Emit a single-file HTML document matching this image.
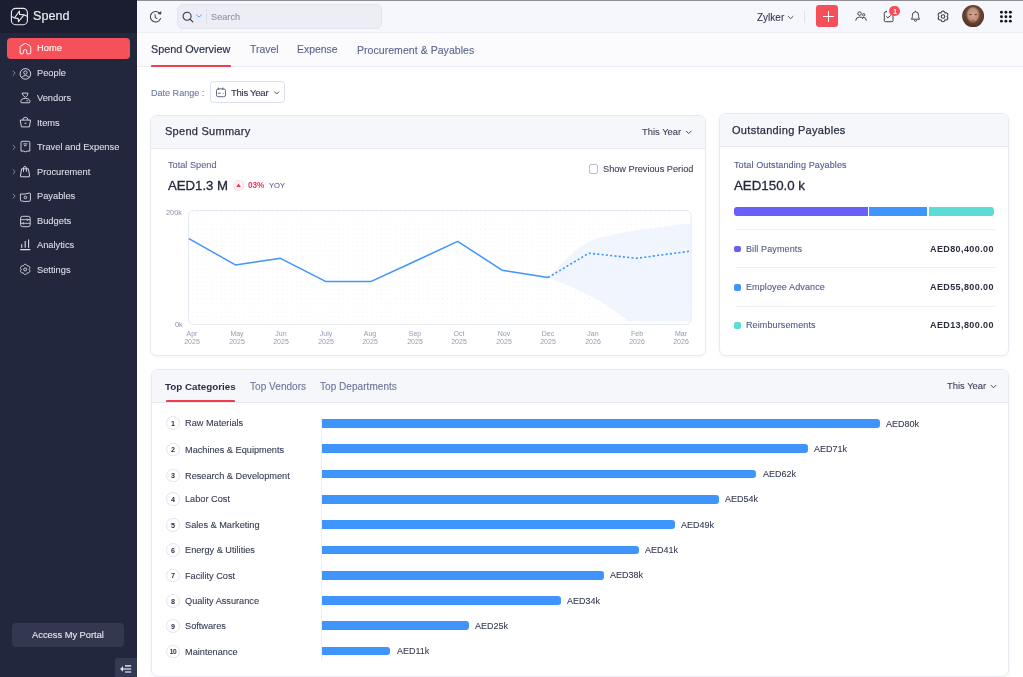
<!DOCTYPE html>
<html><head><meta charset="utf-8">
<style>
*{margin:0;padding:0;box-sizing:border-box}
html,body{width:1023px;height:677px;overflow:hidden;background:#ffffff;font-family:"Liberation Sans",sans-serif;position:relative}
.a{position:absolute;white-space:nowrap;line-height:1;will-change:transform}
svg{display:block}
</style></head><body>
<div style="position:absolute;left:0px;top:0px;width:137px;height:677px;background:#22273d"></div>
<div style="position:absolute;left:0px;top:0px;width:137px;height:33px;background:#1b1e30"></div>
<svg style="position:absolute;left:10px;top:7px;" width="19" height="19" viewBox="10.000 7.000 19 19" fill="none"><rect x="11.4" y="8.3" width="16" height="16.4" rx="4.3" stroke="#e8e9ef" stroke-width="1.15"/><path d="M19.5 14.4 L19.4 11 L14.6 17.9 M11.6 16.3 Q14 18.4 18.3 18.6 L18.4 21.7 L23.9 15.1 M19.5 14.4 Q24.5 14.3 27.2 16.2" stroke="#e8e9ef" stroke-width="1.1" stroke-linejoin="round" stroke-linecap="round"/></svg>
<div class="a" style="left:33.20px;top:9.73px;font-size:12.6px;color:#eceef4;-webkit-text-stroke:0.15px #eceef4;">Spend</div>
<div style="position:absolute;left:7px;top:38px;width:123px;height:21px;background:#f5515a;border-radius:4px"></div>
<div class="a" style="left:37.20px;top:43.83px;font-size:9.3px;color:#fff;-webkit-text-stroke:0.1px #fff;">Home</div>
<div class="a" style="left:37.20px;top:69.23px;font-size:9.3px;color:#dcdee8;-webkit-text-stroke:0.1px #dcdee8;">People</div>
<svg style="position:absolute;left:11px;top:69px;" width="6" height="8" viewBox="0.000 -0.700 6 8" fill="none"><path d="M2.0 1.4 L4.2 3.5 L2.0 5.6" stroke="#8b90a6" stroke-width="0.9" stroke-linecap="round" stroke-linejoin="round"/></svg>
<div class="a" style="left:37.20px;top:93.83px;font-size:9.3px;color:#dcdee8;-webkit-text-stroke:0.1px #dcdee8;">Vendors</div>
<div class="a" style="left:37.20px;top:118.53px;font-size:9.3px;color:#dcdee8;-webkit-text-stroke:0.1px #dcdee8;">Items</div>
<div class="a" style="left:37.20px;top:143.33px;font-size:9.3px;color:#dcdee8;-webkit-text-stroke:0.1px #dcdee8;">Travel and Expense</div>
<svg style="position:absolute;left:11px;top:143px;" width="6" height="8" viewBox="0.000 -0.800 6 8" fill="none"><path d="M2.0 1.4 L4.2 3.5 L2.0 5.6" stroke="#8b90a6" stroke-width="0.9" stroke-linecap="round" stroke-linejoin="round"/></svg>
<div class="a" style="left:37.20px;top:167.73px;font-size:9.3px;color:#dcdee8;-webkit-text-stroke:0.1px #dcdee8;">Procurement</div>
<svg style="position:absolute;left:11px;top:168px;" width="6" height="8" viewBox="0.000 -0.200 6 8" fill="none"><path d="M2.0 1.4 L4.2 3.5 L2.0 5.6" stroke="#8b90a6" stroke-width="0.9" stroke-linecap="round" stroke-linejoin="round"/></svg>
<div class="a" style="left:37.20px;top:192.23px;font-size:9.3px;color:#dcdee8;-webkit-text-stroke:0.1px #dcdee8;">Payables</div>
<svg style="position:absolute;left:11px;top:192px;" width="6" height="8" viewBox="0.000 -0.700 6 8" fill="none"><path d="M2.0 1.4 L4.2 3.5 L2.0 5.6" stroke="#8b90a6" stroke-width="0.9" stroke-linecap="round" stroke-linejoin="round"/></svg>
<div class="a" style="left:37.20px;top:216.83px;font-size:9.3px;color:#dcdee8;-webkit-text-stroke:0.1px #dcdee8;">Budgets</div>
<div class="a" style="left:37.20px;top:241.13px;font-size:9.3px;color:#dcdee8;-webkit-text-stroke:0.1px #dcdee8;">Analytics</div>
<div class="a" style="left:37.20px;top:265.53px;font-size:9.3px;color:#dcdee8;-webkit-text-stroke:0.1px #dcdee8;">Settings</div>
<svg style="position:absolute;left:19px;top:42px;" width="13" height="13" viewBox="-0.400 -0.400 13 13" fill="none"><path d="M0.7 5 Q0.7 4.1 1.4 3.6 L4.9 1.4 Q6 0.9 7.1 1.4 L10.6 3.6 Q11.35 4.1 11.35 5 V10.6 Q11.35 11.4 10.5 11.4 H8.2 Q7.35 11.4 7.35 10.6 V8.9 Q7.35 7.2 5.7 7.2 Q4.0 7.2 4.0 8.9 V10.6 Q4.0 11.4 3.2 11.4 H1.5 Q0.7 11.4 0.7 10.6 Z" stroke="#fff" stroke-width="0.95" stroke-linejoin="round"/></svg>
<svg style="position:absolute;left:19px;top:67px;" width="13" height="13" viewBox="-0.400 -0.900 13 13" fill="none"><circle cx="6" cy="6" r="5.3" stroke="#dfe1ea" stroke-width="0.95"/><circle cx="6" cy="4.6" r="1.7" stroke="#dfe1ea" stroke-width="0.9"/><path d="M2.6 9.6 Q3.4 7.6 6 7.6 Q8.6 7.6 9.4 9.6" stroke="#dfe1ea" stroke-width="0.9"/></svg>
<svg style="position:absolute;left:19px;top:92px;" width="13" height="13" viewBox="-0.400 -0.200 13 13" fill="none"><path d="M2.6 0.9 H8.4 Q8.9 3.4 6 5.2 Q3.2 3.4 2.6 0.9 Z" stroke="#dfe1ea" stroke-width="0.9" stroke-linejoin="round"/><path d="M1.4 9.6 Q1.4 6.2 6 6.2 Q10.6 6.2 10.6 9.6 Q10.6 10.6 9.6 10.6 H2.4 Q1.4 10.6 1.4 9.6 Z" stroke="#dfe1ea" stroke-width="0.9"/><path d="M7 8.6 H8.6" stroke="#dfe1ea" stroke-width="0.9"/></svg>
<svg style="position:absolute;left:19px;top:116px;" width="13" height="13" viewBox="-0.400 -0.500 13 13" fill="none"><path d="M3.4 3.6 Q3.4 0.8 6 0.8 Q8.6 0.8 8.6 3.6" stroke="#dfe1ea" stroke-width="0.9"/><path d="M0.8 3.6 H11.2 L10 10.4 H2 Z" stroke="#dfe1ea" stroke-width="0.9" stroke-linejoin="round"/><path d="M5 6.8 H7" stroke="#dfe1ea" stroke-width="0.9"/></svg>
<svg style="position:absolute;left:19px;top:140px;" width="13" height="13" viewBox="-0.400 -0.500 13 13" fill="none"><path d="M1.6 1.8 Q1.6 0.8 2.6 0.8 H9.4 Q10.4 0.8 10.4 1.8 V10.6 L7.6 10.6 L6 11.4 L4.4 10.6 L1.6 10.6 Z" stroke="#dfe1ea" stroke-width="0.9" stroke-linejoin="round"/><path d="M4 3.4 H8 M4.6 5.2 H7" stroke="#dfe1ea" stroke-width="0.9"/></svg>
<svg style="position:absolute;left:19px;top:191px;" width="13" height="13" viewBox="-0.400 -0.400 13 13" fill="none"><path d="M1 2.6 Q5 3.2 10 1.6 Q11 1.4 11 2.4 V9 Q11 9.8 10 9.9 Q5 10.4 1.8 9.6 Q1 9.4 1 8.6 Z" stroke="#dfe1ea" stroke-width="0.9" stroke-linejoin="round"/><circle cx="6" cy="6" r="1.3" stroke="#dfe1ea" stroke-width="0.9"/></svg>
<svg style="position:absolute;left:19px;top:215px;" width="13" height="13" viewBox="-0.400 -0.500 13 13" fill="none"><rect x="1.2" y="0.8" width="9.6" height="10.4" rx="2" stroke="#dfe1ea" stroke-width="0.9"/><path d="M1.2 4.2 H10.8 M1.2 7.8 H10.8 M7.6 3 L8.8 4.2 L7.6 5.4 M4.4 6.6 L3.2 7.8 L4.4 9" stroke="#dfe1ea" stroke-width="0.8"/></svg>
<svg style="position:absolute;left:16px;top:162px;" width="18" height="18" viewBox="16.000 162.000 18 18" fill="none"><path d="M21.6 168.8 H28.4 L29.6 176.1 Q29.7 176.8 29.0 176.8 H21.0 Q20.3 176.8 20.4 176.1 Z" stroke="#dfe1ea" stroke-width="0.95" stroke-linejoin="round"/><path d="M23.3 168.8 Q23.3 166.4 24.95 166.4 Q26.6 166.4 26.6 168.8 M23.5 169.7 V171.4 M26.4 169.7 V171.4" stroke="#dfe1ea" stroke-width="0.95" stroke-linecap="round"/></svg>
<svg style="position:absolute;left:16px;top:236px;" width="18" height="18" viewBox="16.000 236.000 18 18" fill="none"><path d="M20.2 249.6 H30.3 M21.7 247.8 V244.2 M25.2 247.8 V241 M28.6 247.8 V239.5" stroke="#dfe1ea" stroke-width="1.1"/></svg>
<svg style="position:absolute;left:16px;top:260px;" width="18" height="18" viewBox="16.000 260.000 18 18" fill="none"><path d="M29.15 269.40 L29.38 269.69 L29.57 270.01 L29.72 270.36 L29.82 270.72 L29.85 271.09 L29.81 271.45 L29.70 271.79 L29.52 272.10 L29.28 272.36 L28.99 272.58 L28.66 272.74 L28.30 272.84 L27.92 272.88 L27.54 272.87 L27.18 272.82 L27.04 273.17 L26.85 273.50 L26.63 273.80 L26.36 274.06 L26.06 274.27 L25.73 274.42 L25.38 274.49 L25.02 274.49 L24.67 274.42 L24.34 274.27 L24.04 274.06 L23.77 273.80 L23.55 273.50 L23.36 273.17 L23.23 272.82 L22.86 272.87 L22.48 272.88 L22.10 272.84 L21.74 272.74 L21.41 272.58 L21.12 272.36 L20.88 272.10 L20.70 271.79 L20.59 271.45 L20.55 271.09 L20.58 270.72 L20.68 270.36 L20.83 270.01 L21.02 269.69 L21.25 269.40 L21.02 269.11 L20.83 268.79 L20.68 268.44 L20.58 268.08 L20.55 267.71 L20.59 267.35 L20.70 267.01 L20.88 266.70 L21.12 266.44 L21.41 266.22 L21.74 266.06 L22.10 265.96 L22.48 265.92 L22.86 265.93 L23.22 265.98 L23.36 265.63 L23.55 265.30 L23.77 265.00 L24.04 264.74 L24.34 264.53 L24.67 264.38 L25.02 264.31 L25.38 264.31 L25.73 264.38 L26.06 264.53 L26.36 264.74 L26.63 265.00 L26.85 265.30 L27.04 265.63 L27.18 265.98 L27.54 265.93 L27.92 265.92 L28.30 265.96 L28.66 266.06 L28.99 266.22 L29.28 266.44 L29.52 266.70 L29.70 267.01 L29.81 267.35 L29.85 267.71 L29.82 268.08 L29.72 268.44 L29.57 268.79 L29.38 269.11 Z" stroke="#dfe1ea" stroke-width="0.95" stroke-linejoin="round"/><circle cx="25.2" cy="269.4" r="1.5" stroke="#dfe1ea" stroke-width="0.95"/></svg>
<div style="position:absolute;left:12px;top:623px;width:112px;height:24px;background:#33374f;border-radius:4px"></div>
<div class="a" style="left:68.00px;transform:translateX(-50%);top:630.73px;font-size:9.3px;color:#e6e8f0;-webkit-text-stroke:0.1px #e6e8f0;">Access My Portal</div>
<div style="position:absolute;left:115px;top:658px;width:22px;height:19px;background:#353a54;border-top-left-radius:3px"></div>
<svg style="position:absolute;left:112px;top:655px;" width="28" height="22" viewBox="112.000 655.000 28 22" fill="none"><path d="M125 665.9 H131.2 M122.6 669 H131.2 M125 672.05 H131.2" stroke="#c3c6d3" stroke-width="1.6"/><path d="M120.1 668.9 L123 666.1 L123 671.7 Z" fill="#dfe1ea"/></svg>
<div style="position:absolute;left:137px;top:0px;width:886px;height:33px;background:#f6f7fc;border-bottom:1px solid #ecedf2"></div>
<div style="position:absolute;left:137px;top:0px;width:886px;height:1px;background:#8e8f95"></div>
<svg style="position:absolute;left:145px;top:6px;" width="20" height="20" viewBox="145.000 6.000 20 20" fill="none"><path d="M159.3 13.0 A5.25 5.25 0 1 0 160.5 18.6" stroke="#3a3e50" stroke-width="1.1" stroke-linecap="round"/><path d="M161.3 10.9 L161.1 14.5 L157.7 13.9 Z" fill="#3a3e50"/><path d="M155.0 14.6 L155.4 18.0 L157.0 18.4" stroke="#3a3e50" stroke-width="1" stroke-linecap="round" stroke-linejoin="round"/></svg>
<div style="position:absolute;left:177px;top:4px;width:205px;height:25px;background:#ecedf5;border:1px solid #e2e4ee;border-radius:6px"></div>
<svg style="position:absolute;left:181px;top:10px;" width="14" height="14" viewBox="0.000 0.000 14 14" fill="none"><circle cx="6.1" cy="6.2" r="4.0" stroke="#2e3246" stroke-width="1.05"/><path d="M9.0 9.1 L11.8 11.9" stroke="#2e3246" stroke-width="1.1" stroke-linecap="round"/></svg>
<svg style="position:absolute;left:195px;top:13px;" width="8" height="6" viewBox="0.000 0.000 8 6" fill="none"><path d="M1.6 2.0 L4 4.2 L6.4 2.0" stroke="#5b9af2" stroke-width="0.95" stroke-linecap="round"/></svg>
<div style="position:absolute;left:206px;top:9px;width:1px;height:15px;background:#dcdee8"></div>
<div class="a" style="left:211.00px;top:13.21px;font-size:9.2px;color:#8f94a8;-webkit-text-stroke:0.1px #8f94a8;">Search</div>
<div class="a" style="left:757.00px;top:13.04px;font-size:10px;color:#30354a;-webkit-text-stroke:0.1px #30354a;">Zylker</div>
<svg style="position:absolute;left:786px;top:14px;" width="9" height="7" viewBox="0.000 0.000 9 7" fill="none"><path d="M2.2 2.4 L4.6 4.7 L7 2.4" stroke="#4a4f62" stroke-width="1" stroke-linecap="round"/></svg>
<div style="position:absolute;left:804px;top:11px;width:1px;height:12px;background:#e0e2ea"></div>
<div style="position:absolute;left:816px;top:5px;width:22px;height:22px;background:#f5505a;border-radius:3px"></div>
<div style="position:absolute;left:822.5px;top:16.1px;width:11px;height:0.9px;background:#fff"></div>
<div style="position:absolute;left:827.6px;top:11px;width:0.9px;height:11px;background:#fff"></div>
<svg style="position:absolute;left:852px;top:8px;" width="18" height="16" viewBox="852.000 8.000 18 16" fill="none"><circle cx="859.6" cy="13.6" r="1.75" stroke="#34384a" stroke-width="0.95"/><circle cx="863.7" cy="14.8" r="1.2" stroke="#34384a" stroke-width="0.9"/><path d="M855.7 20.3 Q855.9 17.1 859.6 17.0 Q862.0 17.0 862.9 18.4 M862.4 17.9 Q863 17.4 864 17.4 Q866.2 17.5 866.3 20.3" stroke="#34384a" stroke-width="0.95" stroke-linecap="round"/></svg>
<svg style="position:absolute;left:880px;top:8px;" width="16" height="16" viewBox="880.000 8.000 16 16" fill="none"><path d="M886.2 12.0 H885.4 Q884.3 12.0 884.3 13.1 V20.6 Q884.3 21.7 885.4 21.7 H891.9 Q893.0 21.7 893.0 20.6 V13.1 Q893.0 12.0 891.9 12.0 H891.2" stroke="#34384a" stroke-width="0.95"/><circle cx="886.4" cy="11.6" r="0.75" fill="#34384a"/><path d="M886.6 16.6 L887.9 17.8 L890.6 15.6" stroke="#34384a" stroke-width="0.95" stroke-linecap="round" stroke-linejoin="round"/></svg>
<div style="position:absolute;left:889.4px;top:5.9px;width:10.4px;height:10.4px;border-radius:50%;background:#f5505a"></div>
<div class="a" style="left:894.60px;transform:translateX(-50%);top:7.95px;font-size:7.5px;color:#fff;font-weight:bold;">1</div>
<svg style="position:absolute;left:909px;top:10px;" width="13" height="13" viewBox="0.000 0.000 13 13" fill="none"><path d="M2.4 9.2 Q3.4 8.2 3.4 6.4 V5.2 Q3.4 1.8 6.5 1.8 Q9.6 1.8 9.6 5.2 V6.4 Q9.6 8.2 10.6 9.2 Z" stroke="#3a3f52" stroke-width="1" stroke-linejoin="round"/><path d="M5.2 10.6 Q6.5 12.4 7.8 10.6" stroke="#3a3f52" stroke-width="1" stroke-linecap="round"/><path d="M6.5 0.8 V1.8" stroke="#3a3f52" stroke-width="1"/></svg>
<svg style="position:absolute;left:936px;top:9px;" width="14" height="14" viewBox="-0.500 -0.900 14 14" fill="none"><path d="M10.50 6.50 L10.76 6.80 L10.98 7.13 L11.16 7.49 L11.27 7.87 L11.32 8.25 L11.28 8.63 L11.17 8.98 L10.99 9.30 L10.74 9.58 L10.43 9.79 L10.07 9.95 L9.69 10.04 L9.29 10.07 L8.89 10.04 L8.50 9.96 L8.37 10.34 L8.20 10.70 L7.97 11.03 L7.70 11.32 L7.39 11.55 L7.05 11.71 L6.68 11.79 L6.32 11.79 L5.95 11.71 L5.61 11.55 L5.30 11.32 L5.03 11.03 L4.80 10.70 L4.63 10.34 L4.50 9.96 L4.11 10.04 L3.71 10.07 L3.31 10.04 L2.93 9.95 L2.57 9.79 L2.26 9.58 L2.01 9.30 L1.83 8.98 L1.72 8.63 L1.68 8.25 L1.73 7.87 L1.84 7.49 L2.02 7.13 L2.24 6.80 L2.50 6.50 L2.24 6.20 L2.02 5.87 L1.84 5.51 L1.73 5.13 L1.68 4.75 L1.72 4.37 L1.83 4.02 L2.01 3.70 L2.26 3.42 L2.57 3.21 L2.93 3.05 L3.31 2.96 L3.71 2.93 L4.11 2.96 L4.50 3.04 L4.63 2.66 L4.80 2.30 L5.03 1.97 L5.30 1.68 L5.61 1.45 L5.95 1.29 L6.32 1.21 L6.68 1.21 L7.05 1.29 L7.39 1.45 L7.70 1.68 L7.97 1.97 L8.20 2.30 L8.37 2.66 L8.50 3.04 L8.89 2.96 L9.29 2.93 L9.69 2.96 L10.07 3.05 L10.43 3.21 L10.74 3.42 L10.99 3.70 L11.17 4.02 L11.28 4.37 L11.32 4.75 L11.27 5.13 L11.16 5.51 L10.98 5.87 L10.76 6.20 Z" stroke="#34384a" stroke-width="1.05" stroke-linejoin="round"/><circle cx="6.5" cy="6.5" r="1.75" stroke="#34384a" stroke-width="1.05"/></svg>
<svg style="position:absolute;left:962px;top:5px;" width="23" height="23" viewBox="0.000 0.000 23 23" fill="none"><defs><clipPath id="av"><circle cx="11.1" cy="11.1" r="11"/></clipPath><radialGradient id="fg" cx="0.5" cy="0.45" r="0.5"><stop offset="0" stop-color="#d2a58e"/><stop offset="0.7" stop-color="#c0917a"/><stop offset="1" stop-color="#c0917a" stop-opacity="0"/></radialGradient><radialGradient id="hg" cx="0.5" cy="0.4" r="0.6"><stop offset="0" stop-color="#8a5e48"/><stop offset="1" stop-color="#4e3022"/></radialGradient></defs><g clip-path="url(#av)"><rect width="23" height="23" fill="url(#hg)"/><ellipse cx="11" cy="10.4" rx="7" ry="8.6" fill="url(#fg)"/><ellipse cx="8.4" cy="9.6" rx="1.6" ry="0.7" fill="#6e4a3c"/><ellipse cx="13.8" cy="9.6" rx="1.6" ry="0.7" fill="#6e4a3c"/><ellipse cx="11" cy="15.6" rx="2" ry="0.8" fill="#a06a5a"/></g></svg>
<svg style="position:absolute;left:1000px;top:10px;" width="12" height="13" viewBox="0.000 -0.800 12 13" fill="none"><circle cx="1.45" cy="1.45" r="1.45" fill="#15171f"/><circle cx="1.45" cy="5.90" r="1.45" fill="#15171f"/><circle cx="1.45" cy="10.35" r="1.45" fill="#15171f"/><circle cx="5.90" cy="1.45" r="1.45" fill="#15171f"/><circle cx="5.90" cy="5.90" r="1.45" fill="#15171f"/><circle cx="5.90" cy="10.35" r="1.45" fill="#15171f"/><circle cx="10.35" cy="1.45" r="1.45" fill="#15171f"/><circle cx="10.35" cy="5.90" r="1.45" fill="#15171f"/><circle cx="10.35" cy="10.35" r="1.45" fill="#15171f"/></svg>
<div style="position:absolute;left:137px;top:33px;width:886px;height:34px;background:#fbfbfe;border-bottom:1px solid #ebecf5"></div>
<div class="a" style="left:150.60px;top:44.06px;font-size:10.8px;color:#2f3348;-webkit-text-stroke:0.2px #2f3348;">Spend Overview</div>
<div style="position:absolute;left:150.6px;top:65px;width:80.4px;height:2.2px;background:#f03d4b;border-radius:1px 1px 0 0"></div>
<div class="a" style="left:250.30px;top:44.80px;font-size:10.4px;color:#5b6389;-webkit-text-stroke:0.1px #5b6389;">Travel</div>
<div class="a" style="left:297.20px;top:44.80px;font-size:10.4px;color:#5b6389;-webkit-text-stroke:0.1px #5b6389;">Expense</div>
<div class="a" style="left:357.30px;top:44.71px;font-size:10.5px;color:#5b6389;letter-spacing:0.05px;-webkit-text-stroke:0.1px #5b6389;">Procurement &amp; Payables</div>
<div class="a" style="left:151.40px;top:88.54px;font-size:9.05px;color:#6d76a0;-webkit-text-stroke:0.1px #6d76a0;">Date Range :</div>
<div style="position:absolute;left:210.4px;top:81.3px;width:74.3px;height:21.7px;background:#fff;border:1px solid #dcdff0;border-radius:4px"></div>
<svg style="position:absolute;left:212px;top:84px;" width="16" height="16" viewBox="212.000 84.000 16 16" fill="none"><rect x="216.5" y="88.9" width="9" height="7.8" rx="1.8" stroke="#5f6689" stroke-width="1"/><path d="M218.4 87.9 V89.6 M222.9 87.9 V89.6 M218.4 93.2 H220.2" stroke="#5f6689" stroke-width="1" stroke-linecap="round"/><circle cx="223.2" cy="93.2" r="0.55" fill="#5f6689"/></svg>
<div class="a" style="left:231.20px;top:88.37px;font-size:9.6px;color:#2f3348;letter-spacing:-0.3px;-webkit-text-stroke:0.1px #2f3348;">This Year</div>
<svg style="position:absolute;left:272px;top:88px;" width="9" height="9" viewBox="272.000 88.000 9 9" fill="none"><path d="M274.5 91.8 L276.7 94.0 L278.9 91.8" stroke="#4a4f62" stroke-width="1" stroke-linecap="round" stroke-linejoin="round"/></svg>
<div style="position:absolute;left:150px;top:115px;width:556px;height:241px;background:#fff;border:1px solid #e8eaf2;border-radius:7px;overflow:hidden;box-shadow:0 1px 3px rgba(30,40,80,0.05)"><div style="position:absolute;left:0;top:0;right:0;height:33px;background:#f6f7fb;border-bottom:1px solid #e8eaf2"></div></div>
<div class="a" style="left:164.50px;top:125.99px;font-size:11px;color:#2b2f44;letter-spacing:0.27px;-webkit-text-stroke:0.25px #2b2f44;">Spend Summary</div>
<div class="a" style="left:641.90px;top:127.34px;font-size:9.4px;color:#3a3f55;-webkit-text-stroke:0.1px #3a3f55;">This Year</div>
<svg style="position:absolute;left:684px;top:128px;" width="10" height="9" viewBox="-0.200 -0.800 10 9" fill="none"><path d="M2.2 2.4 L4.5 4.8 L6.8 2.4" stroke="#4a4f62" stroke-width="1" stroke-linecap="round"/></svg>
<div style="position:absolute;left:589px;top:164.4px;width:9.2px;height:9.2px;border:1px solid #b9bdcc;border-radius:2px;background:#fff"></div>
<div class="a" style="left:603.00px;top:165.11px;font-size:9.2px;color:#3a3f55;-webkit-text-stroke:0.1px #3a3f55;">Show Previous Period</div>
<div class="a" style="left:167.60px;top:161.01px;font-size:9.2px;color:#5d6690;-webkit-text-stroke:0.1px #5d6690;">Total Spend</div>
<div class="a" style="left:167.60px;top:178.73px;font-size:13.2px;color:#23283d;-webkit-text-stroke:0.3px #23283d;">AED1.3 M</div>
<div style="position:absolute;left:233.1px;top:180.1px;width:10.9px;height:10.9px;border-radius:50%;background:#fff3f5;border:1px solid #fadbe2"></div>
<svg style="position:absolute;left:235px;top:182px;" width="7" height="6" viewBox="0.000 0.000 7 6" fill="none"><path d="M3.6 1.6 L5.8 4.9 H1.4 Z" fill="#ec3463"/></svg>
<div class="a" style="left:247.90px;top:181.66px;font-size:8.2px;color:#ec3463;font-weight:bold;">03%</div>
<div class="a" style="left:269.00px;top:182.17px;font-size:7.6px;color:#5b6390;-webkit-text-stroke:0.1px #5b6390;">YOY</div>
<svg style="position:absolute;left:150px;top:190px;" width="560" height="170" viewBox="150.000 190.000 560 170" fill="none"><defs><pattern id="dots" x="192.1" y="215.4" width="4.72" height="4.38" patternUnits="userSpaceOnUse"><rect x="-0.65" y="-0.65" width="1.3" height="1.3" fill="#e1e4ee"/></pattern>
<clipPath id="pc"><rect x="188.5" y="210.5" width="502.6" height="113.9" rx="5"/></clipPath></defs>
<rect x="188.5" y="210.5" width="502.6" height="113.9" rx="5" fill="#fff"/>
<rect x="188.5" y="210.5" width="502.6" height="113.9" fill="url(#dots)" clip-path="url(#pc)"/>
<path d="M548.1 277.5 C565 262 575 246 598 238 C620 232 650 228 692 223 V321.5 H628 C605 300 565 284 548.1 277.5 Z" fill="#e6effd" fill-opacity="0.55" clip-path="url(#pc)"/>
<rect x="188.5" y="210.5" width="502.6" height="113.9" rx="5" stroke="#e6e9f2" stroke-width="1"/>
<polyline points="188.9,238.7 235.4,264.9 280.4,258.3 326.1,281.6 370.7,281.6 414.5,261.5 457.7,241.4 502.0,270.2 548.1,277.5" stroke="#4094fb" stroke-width="1.5" fill="none" stroke-linejoin="round"/>
<polyline points="548.1,277.5 588.9,253.2 636.6,258.3 690.7,251.1" stroke="#4094fb" stroke-width="1.6" fill="none" stroke-dasharray="2.1 2.2"/></svg>
<div class="a" style="right:840.50px;top:208.64px;font-size:7.4px;color:#8d93ad;-webkit-text-stroke:0.01px #8d93ad;">200k</div>
<div class="a" style="right:840.70px;top:320.54px;font-size:7.4px;color:#8d93ad;-webkit-text-stroke:0.01px #8d93ad;">0k</div>
<div class="a" style="left:192.40px;transform:translateX(-50%);top:329.97px;font-size:7.0px;color:#959bb4;-webkit-text-stroke:0.01px #959bb4;">Apr</div>
<div class="a" style="left:192.40px;transform:translateX(-50%);top:337.57px;font-size:7.0px;color:#959bb4;-webkit-text-stroke:0.01px #959bb4;">2025</div>
<div class="a" style="left:236.86px;transform:translateX(-50%);top:329.97px;font-size:7.0px;color:#959bb4;-webkit-text-stroke:0.01px #959bb4;">May</div>
<div class="a" style="left:236.86px;transform:translateX(-50%);top:337.57px;font-size:7.0px;color:#959bb4;-webkit-text-stroke:0.01px #959bb4;">2025</div>
<div class="a" style="left:281.32px;transform:translateX(-50%);top:329.97px;font-size:7.0px;color:#959bb4;-webkit-text-stroke:0.01px #959bb4;">Jun</div>
<div class="a" style="left:281.32px;transform:translateX(-50%);top:337.57px;font-size:7.0px;color:#959bb4;-webkit-text-stroke:0.01px #959bb4;">2025</div>
<div class="a" style="left:325.78px;transform:translateX(-50%);top:329.97px;font-size:7.0px;color:#959bb4;-webkit-text-stroke:0.01px #959bb4;">July</div>
<div class="a" style="left:325.78px;transform:translateX(-50%);top:337.57px;font-size:7.0px;color:#959bb4;-webkit-text-stroke:0.01px #959bb4;">2025</div>
<div class="a" style="left:370.24px;transform:translateX(-50%);top:329.97px;font-size:7.0px;color:#959bb4;-webkit-text-stroke:0.01px #959bb4;">Aug</div>
<div class="a" style="left:370.24px;transform:translateX(-50%);top:337.57px;font-size:7.0px;color:#959bb4;-webkit-text-stroke:0.01px #959bb4;">2025</div>
<div class="a" style="left:414.70px;transform:translateX(-50%);top:329.97px;font-size:7.0px;color:#959bb4;-webkit-text-stroke:0.01px #959bb4;">Sep</div>
<div class="a" style="left:414.70px;transform:translateX(-50%);top:337.57px;font-size:7.0px;color:#959bb4;-webkit-text-stroke:0.01px #959bb4;">2025</div>
<div class="a" style="left:459.16px;transform:translateX(-50%);top:329.97px;font-size:7.0px;color:#959bb4;-webkit-text-stroke:0.01px #959bb4;">Oct</div>
<div class="a" style="left:459.16px;transform:translateX(-50%);top:337.57px;font-size:7.0px;color:#959bb4;-webkit-text-stroke:0.01px #959bb4;">2025</div>
<div class="a" style="left:503.62px;transform:translateX(-50%);top:329.97px;font-size:7.0px;color:#959bb4;-webkit-text-stroke:0.01px #959bb4;">Nov</div>
<div class="a" style="left:503.62px;transform:translateX(-50%);top:337.57px;font-size:7.0px;color:#959bb4;-webkit-text-stroke:0.01px #959bb4;">2025</div>
<div class="a" style="left:548.08px;transform:translateX(-50%);top:329.97px;font-size:7.0px;color:#959bb4;-webkit-text-stroke:0.01px #959bb4;">Dec</div>
<div class="a" style="left:548.08px;transform:translateX(-50%);top:337.57px;font-size:7.0px;color:#959bb4;-webkit-text-stroke:0.01px #959bb4;">2025</div>
<div class="a" style="left:592.54px;transform:translateX(-50%);top:329.97px;font-size:7.0px;color:#959bb4;-webkit-text-stroke:0.01px #959bb4;">Jan</div>
<div class="a" style="left:592.54px;transform:translateX(-50%);top:337.57px;font-size:7.0px;color:#959bb4;-webkit-text-stroke:0.01px #959bb4;">2026</div>
<div class="a" style="left:637.00px;transform:translateX(-50%);top:329.97px;font-size:7.0px;color:#959bb4;-webkit-text-stroke:0.01px #959bb4;">Feb</div>
<div class="a" style="left:637.00px;transform:translateX(-50%);top:337.57px;font-size:7.0px;color:#959bb4;-webkit-text-stroke:0.01px #959bb4;">2026</div>
<div class="a" style="left:681.46px;transform:translateX(-50%);top:329.97px;font-size:7.0px;color:#959bb4;-webkit-text-stroke:0.01px #959bb4;">Mar</div>
<div class="a" style="left:681.46px;transform:translateX(-50%);top:337.57px;font-size:7.0px;color:#959bb4;-webkit-text-stroke:0.01px #959bb4;">2026</div>
<div style="position:absolute;left:719px;top:113px;width:290px;height:243px;background:#fff;border:1px solid #e8eaf2;border-radius:7px;overflow:hidden;box-shadow:0 1px 3px rgba(30,40,80,0.05)"><div style="position:absolute;left:0;top:0;right:0;height:33px;background:#f6f7fb;border-bottom:1px solid #e8eaf2"></div></div>
<div class="a" style="left:731.80px;top:124.69px;font-size:11px;color:#2b2f44;letter-spacing:0.3px;-webkit-text-stroke:0.25px #2b2f44;">Outstanding Payables</div>
<div class="a" style="left:734.00px;top:160.94px;font-size:9.05px;color:#4f5a8a;letter-spacing:0.1px;-webkit-text-stroke:0.1px #4f5a8a;">Total Outstanding Payables</div>
<div class="a" style="left:733.80px;top:178.74px;font-size:13.3px;color:#23283d;-webkit-text-stroke:0.3px #23283d;">AED150.0 k</div>
<div style="position:absolute;left:734.4px;top:206.5px;width:133.4px;height:9.4px;background:#6660f6;border-radius:3px 0 0 3px"></div>
<div style="position:absolute;left:869px;top:206.5px;width:58.2px;height:9.4px;background:#4095fd"></div>
<div style="position:absolute;left:928.6px;top:206.5px;width:65.8px;height:9.4px;background:#5cdcd6;border-radius:0 3px 3px 0"></div>
<div style="position:absolute;left:735px;top:229.2px;width:259.5px;height:1px;background:#eef0f5"></div>
<div style="position:absolute;left:735px;top:267.4px;width:259.5px;height:1px;background:#eef0f5"></div>
<div style="position:absolute;left:735px;top:305.8px;width:259.5px;height:1px;background:#eef0f5"></div>
<div style="position:absolute;left:734.3px;top:245.6px;width:7px;height:6.8px;background:#6660f6;border-radius:2px"></div>
<div class="a" style="left:746.10px;top:244.78px;font-size:9.0px;color:#4f5a85;letter-spacing:0.12px;-webkit-text-stroke:0.1px #4f5a85;">Bill Payments</div>
<div class="a" style="right:28.70px;top:244.78px;font-size:9.0px;color:#2a2e40;font-weight:bold;letter-spacing:0.4px;">AED80,400.00</div>
<div style="position:absolute;left:734.3px;top:284.09999999999997px;width:7px;height:6.8px;background:#4095fd;border-radius:2px"></div>
<div class="a" style="left:746.10px;top:283.28px;font-size:9.0px;color:#4f5a85;letter-spacing:0.12px;-webkit-text-stroke:0.1px #4f5a85;">Employee Advance</div>
<div class="a" style="right:28.70px;top:283.28px;font-size:9.0px;color:#2a2e40;font-weight:bold;letter-spacing:0.4px;">AED55,800.00</div>
<div style="position:absolute;left:734.3px;top:322.0px;width:7px;height:6.8px;background:#5cdcd6;border-radius:2px"></div>
<div class="a" style="left:746.10px;top:321.18px;font-size:9.0px;color:#4f5a85;letter-spacing:0.12px;-webkit-text-stroke:0.1px #4f5a85;">Reimbursements</div>
<div class="a" style="right:28.70px;top:321.18px;font-size:9.0px;color:#2a2e40;font-weight:bold;letter-spacing:0.4px;">AED13,800.00</div>
<div style="position:absolute;left:151px;top:369px;width:858px;height:308px;background:#fff;border:1px solid #e8eaf2;border-radius:7px;overflow:hidden;box-shadow:0 1px 3px rgba(30,40,80,0.05)"><div style="position:absolute;left:0;top:0;right:0;height:33px;background:#f6f7fb;border-bottom:1px solid #e8eaf2"></div></div>
<div class="a" style="left:165.40px;top:381.90px;font-size:9.8px;color:#2b2f44;font-weight:bold;">Top Categories</div>
<div style="position:absolute;left:166px;top:399.9px;width:69px;height:2.1px;background:#f03d4b;border-radius:1px 1px 0 0"></div>
<div class="a" style="left:249.50px;top:381.74px;font-size:10px;color:#6b7396;letter-spacing:0.05px;-webkit-text-stroke:0.1px #6b7396;">Top Vendors</div>
<div class="a" style="left:320.30px;top:381.74px;font-size:10px;color:#6b7396;letter-spacing:0.05px;-webkit-text-stroke:0.1px #6b7396;">Top Departments</div>
<div class="a" style="left:946.50px;top:381.04px;font-size:9.4px;color:#3a3f55;-webkit-text-stroke:0.1px #3a3f55;">This Year</div>
<svg style="position:absolute;left:989px;top:383px;" width="9" height="8" viewBox="0.000 0.000 9 8" fill="none"><path d="M2.2 2.4 L4.5 4.8 L6.8 2.4" stroke="#4a4f62" stroke-width="1" stroke-linecap="round"/></svg>
<div style="position:absolute;left:321px;top:416.6px;width:1px;height:244px;background:#eceef4"></div>
<div style="position:absolute;left:166.10px;top:416.30px;width:13.6px;height:13.6px;border-radius:50%;border:1px solid #e2e4f0;background:#fff"></div>
<div class="a" style="left:172.90px;transform:translateX(-50%);top:419.81px;font-size:7.2px;color:#2b2f44;font-weight:bold;">1</div>
<div class="a" style="left:184.90px;top:419.41px;font-size:9.2px;color:#343a52;-webkit-text-stroke:0.1px #343a52;">Raw Materials</div>
<div style="position:absolute;left:322px;top:419.0px;width:557.5px;height:8.8px;background:#4095fd;border-radius:0 3px 3px 0"></div>
<div class="a" style="left:885.70px;top:419.58px;font-size:9.0px;color:#343a52;-webkit-text-stroke:0.1px #343a52;">AED80k</div>
<div style="position:absolute;left:166.10px;top:442.60px;width:13.6px;height:13.6px;border-radius:50%;border:1px solid #e2e4f0;background:#fff"></div>
<div class="a" style="left:172.90px;transform:translateX(-50%);top:446.11px;font-size:7.2px;color:#2b2f44;font-weight:bold;">2</div>
<div class="a" style="left:184.90px;top:445.71px;font-size:9.2px;color:#343a52;-webkit-text-stroke:0.1px #343a52;">Machines &amp; Equipments</div>
<div style="position:absolute;left:322px;top:444.3px;width:485.9px;height:8.8px;background:#4095fd;border-radius:0 3px 3px 0"></div>
<div class="a" style="left:814.10px;top:444.88px;font-size:9.0px;color:#343a52;-webkit-text-stroke:0.1px #343a52;">AED71k</div>
<div style="position:absolute;left:166.10px;top:468.70px;width:13.6px;height:13.6px;border-radius:50%;border:1px solid #e2e4f0;background:#fff"></div>
<div class="a" style="left:172.90px;transform:translateX(-50%);top:472.21px;font-size:7.2px;color:#2b2f44;font-weight:bold;">3</div>
<div class="a" style="left:184.90px;top:471.81px;font-size:9.2px;color:#343a52;-webkit-text-stroke:0.1px #343a52;">Research &amp; Development</div>
<div style="position:absolute;left:322px;top:469.6px;width:434.29999999999995px;height:8.8px;background:#4095fd;border-radius:0 3px 3px 0"></div>
<div class="a" style="left:762.50px;top:470.18px;font-size:9.0px;color:#343a52;-webkit-text-stroke:0.1px #343a52;">AED62k</div>
<div style="position:absolute;left:166.10px;top:492.30px;width:13.6px;height:13.6px;border-radius:50%;border:1px solid #e2e4f0;background:#fff"></div>
<div class="a" style="left:172.90px;transform:translateX(-50%);top:495.81px;font-size:7.2px;color:#2b2f44;font-weight:bold;">4</div>
<div class="a" style="left:184.90px;top:495.41px;font-size:9.2px;color:#343a52;-webkit-text-stroke:0.1px #343a52;">Labor Cost</div>
<div style="position:absolute;left:322px;top:494.9px;width:397.20000000000005px;height:8.8px;background:#4095fd;border-radius:0 3px 3px 0"></div>
<div class="a" style="left:725.40px;top:495.48px;font-size:9.0px;color:#343a52;-webkit-text-stroke:0.1px #343a52;">AED54k</div>
<div style="position:absolute;left:166.10px;top:518.00px;width:13.6px;height:13.6px;border-radius:50%;border:1px solid #e2e4f0;background:#fff"></div>
<div class="a" style="left:172.90px;transform:translateX(-50%);top:521.51px;font-size:7.2px;color:#2b2f44;font-weight:bold;">5</div>
<div class="a" style="left:184.90px;top:521.11px;font-size:9.2px;color:#343a52;-webkit-text-stroke:0.1px #343a52;">Sales &amp; Marketing</div>
<div style="position:absolute;left:322px;top:520.2px;width:352.70000000000005px;height:8.8px;background:#4095fd;border-radius:0 3px 3px 0"></div>
<div class="a" style="left:680.90px;top:520.78px;font-size:9.0px;color:#343a52;-webkit-text-stroke:0.1px #343a52;">AED49k</div>
<div style="position:absolute;left:166.10px;top:543.10px;width:13.6px;height:13.6px;border-radius:50%;border:1px solid #e2e4f0;background:#fff"></div>
<div class="a" style="left:172.90px;transform:translateX(-50%);top:546.61px;font-size:7.2px;color:#2b2f44;font-weight:bold;">6</div>
<div class="a" style="left:184.90px;top:546.21px;font-size:9.2px;color:#343a52;-webkit-text-stroke:0.1px #343a52;">Energy &amp; Utilities</div>
<div style="position:absolute;left:322px;top:545.5px;width:316.6px;height:8.8px;background:#4095fd;border-radius:0 3px 3px 0"></div>
<div class="a" style="left:644.80px;top:546.08px;font-size:9.0px;color:#343a52;-webkit-text-stroke:0.1px #343a52;">AED41k</div>
<div style="position:absolute;left:166.10px;top:568.90px;width:13.6px;height:13.6px;border-radius:50%;border:1px solid #e2e4f0;background:#fff"></div>
<div class="a" style="left:172.90px;transform:translateX(-50%);top:572.41px;font-size:7.2px;color:#2b2f44;font-weight:bold;">7</div>
<div class="a" style="left:184.90px;top:572.01px;font-size:9.2px;color:#343a52;-webkit-text-stroke:0.1px #343a52;">Facility Cost</div>
<div style="position:absolute;left:322px;top:570.8px;width:281.79999999999995px;height:8.8px;background:#4095fd;border-radius:0 3px 3px 0"></div>
<div class="a" style="left:610.00px;top:571.38px;font-size:9.0px;color:#343a52;-webkit-text-stroke:0.1px #343a52;">AED38k</div>
<div style="position:absolute;left:166.10px;top:594.00px;width:13.6px;height:13.6px;border-radius:50%;border:1px solid #e2e4f0;background:#fff"></div>
<div class="a" style="left:172.90px;transform:translateX(-50%);top:597.51px;font-size:7.2px;color:#2b2f44;font-weight:bold;">8</div>
<div class="a" style="left:184.90px;top:597.11px;font-size:9.2px;color:#343a52;-webkit-text-stroke:0.1px #343a52;">Quality Assurance</div>
<div style="position:absolute;left:322px;top:596.1px;width:239.20000000000005px;height:8.8px;background:#4095fd;border-radius:0 3px 3px 0"></div>
<div class="a" style="left:567.40px;top:596.68px;font-size:9.0px;color:#343a52;-webkit-text-stroke:0.1px #343a52;">AED34k</div>
<div style="position:absolute;left:166.10px;top:619.30px;width:13.6px;height:13.6px;border-radius:50%;border:1px solid #e2e4f0;background:#fff"></div>
<div class="a" style="left:172.90px;transform:translateX(-50%);top:622.81px;font-size:7.2px;color:#2b2f44;font-weight:bold;">9</div>
<div class="a" style="left:184.90px;top:622.41px;font-size:9.2px;color:#343a52;-webkit-text-stroke:0.1px #343a52;">Softwares</div>
<div style="position:absolute;left:322px;top:621.4px;width:146.8px;height:8.8px;background:#4095fd;border-radius:0 3px 3px 0"></div>
<div class="a" style="left:475.00px;top:621.98px;font-size:9.0px;color:#343a52;-webkit-text-stroke:0.1px #343a52;">AED25k</div>
<div style="position:absolute;left:166.10px;top:644.70px;width:13.6px;height:13.6px;border-radius:50%;border:1px solid #e2e4f0;background:#fff"></div>
<div class="a" style="left:172.90px;transform:translateX(-50%);top:648.71px;font-size:6.6px;color:#2b2f44;font-weight:bold;letter-spacing:-0.3px;">10</div>
<div class="a" style="left:184.90px;top:647.81px;font-size:9.2px;color:#343a52;-webkit-text-stroke:0.1px #343a52;">Maintenance</div>
<div style="position:absolute;left:322px;top:646.7px;width:68.30000000000001px;height:8.8px;background:#4095fd;border-radius:0 3px 3px 0"></div>
<div class="a" style="left:396.50px;top:647.28px;font-size:9.0px;color:#343a52;-webkit-text-stroke:0.1px #343a52;">AED11k</div></body></html>
